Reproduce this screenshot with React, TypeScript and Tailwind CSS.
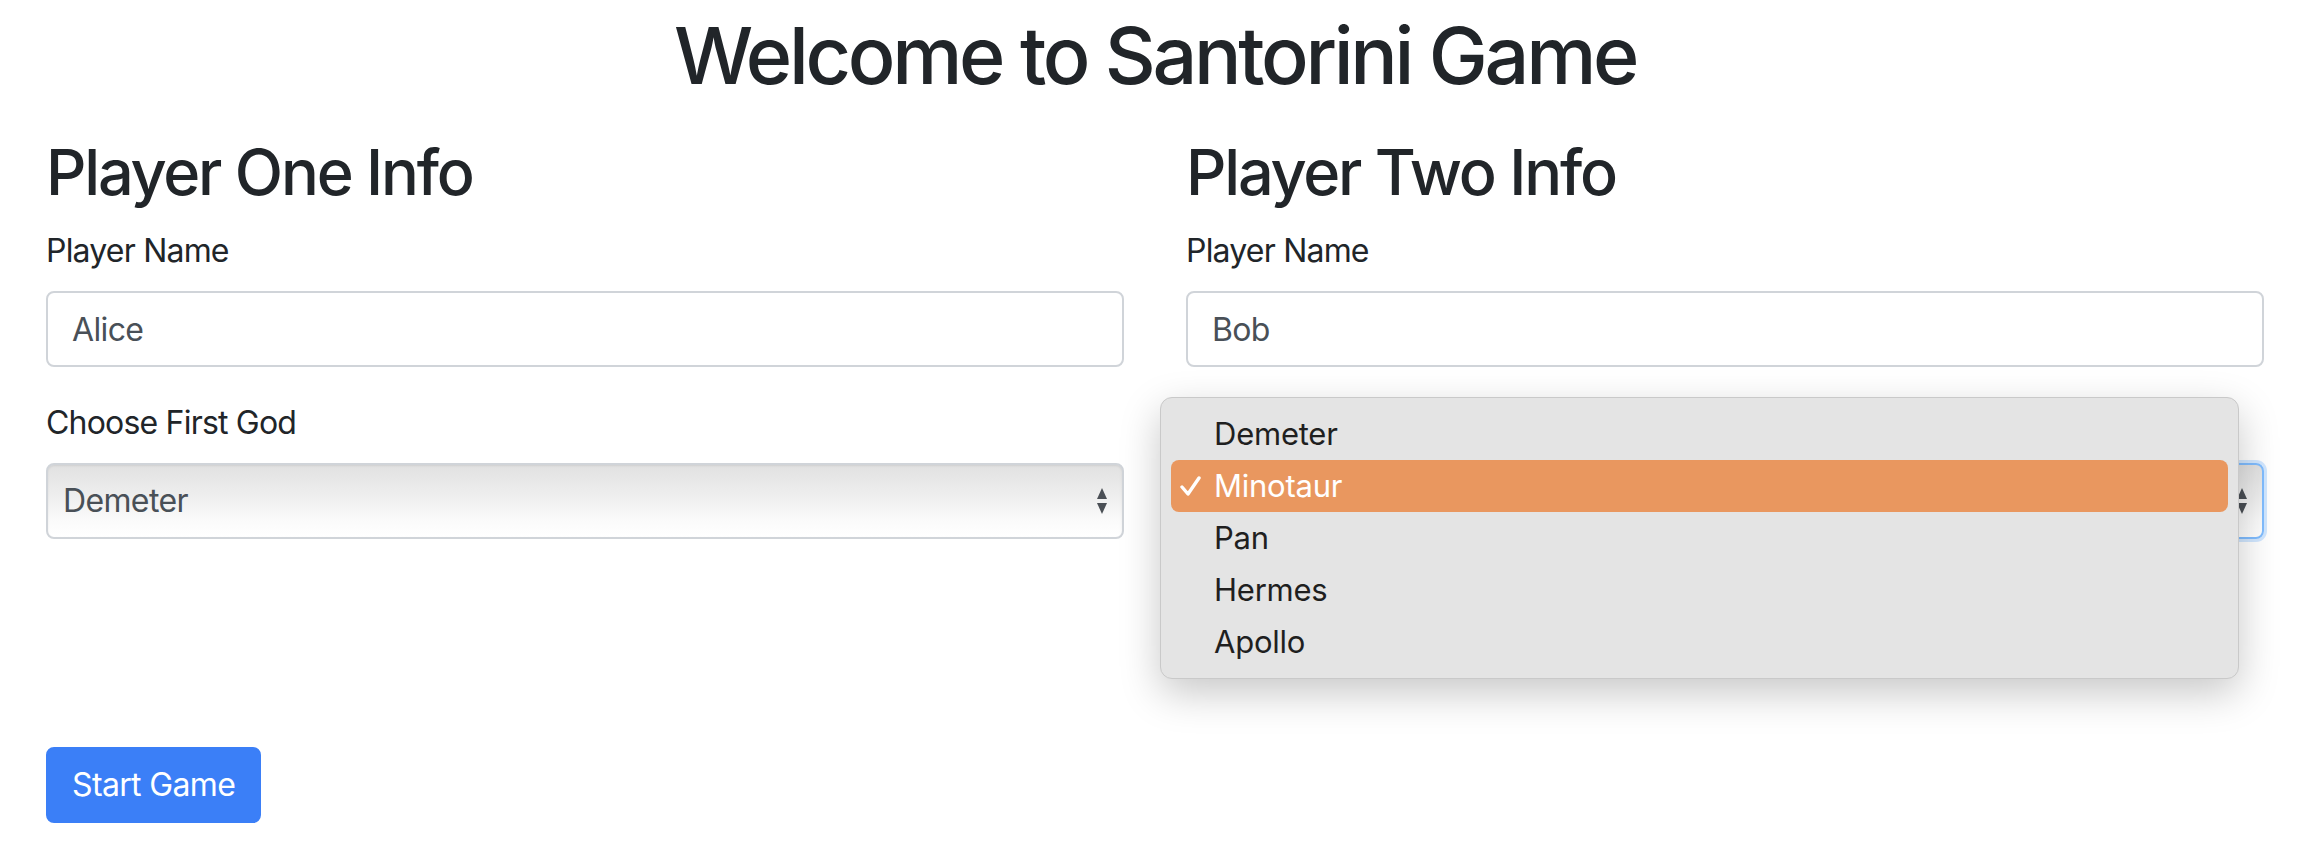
import React from "react";

const gods = ["Demeter", "Minotaur", "Pan", "Hermes", "Apollo"];

function Arrows() {
  return (
    <svg width="12" height="32" viewBox="0 0 12 32" className="shrink-0">
      <path d="M6 3 L11 14 L1 14 Z" fill="#4a4f55" />
      <path d="M1 18 L11 18 L6 29 Z" fill="#4a4f55" />
    </svg>
  );
}

function GodSelect({ value, focused }: { value: string; focused?: boolean }) {
  return (
    <div
      className={
        focused
          ? "flex h-[76px] w-full items-center justify-between rounded-[8px] border-2 border-[#80bdff] bg-[linear-gradient(to_bottom,#e1e1e1,#efefef_45%,#fafafa_75%,#ffffff)] pl-[15px] pr-[14px] text-[32px] tracking-[-0.02em] text-[#495057] shadow-[0_0_0_3px_rgba(0,123,255,0.18)]"
          : "flex h-[76px] w-full items-center justify-between rounded-[8px] border-2 border-[#d0d4d9] bg-[linear-gradient(to_bottom,#e1e1e1,#efefef_45%,#fafafa_75%,#ffffff)] pl-[15px] pr-[14px] text-[32px] tracking-[-0.02em] text-[#495057] shadow-[inset_0_1px_2px_rgba(0,0,0,0.08)]"
      }
    >
      <span className={focused ? "invisible" : ""}>{value}</span>
      <Arrows />
    </div>
  );
}

function GodMenu({ selected }: { selected: string }) {
  return (
    <div className="absolute left-[-26px] top-[-66px] z-10 w-[1079px] rounded-[12px] border border-[#c9c9c9] bg-[#e4e4e4] p-[10px] tracking-[-0.015em] shadow-[0_14px_40px_rgba(0,0,0,0.22)]">
      {gods.map((g) =>
        g === selected ? (
          <div
            key={g}
            className="flex h-[52px] items-center gap-[13px] rounded-[8px] bg-[#e9975f] pl-[9px] text-[31px] text-white"
          >
            <svg width="21" height="20" viewBox="0 0 21 20">
              <path
                d="M2 11 L8 18 L19 2"
                fill="none"
                stroke="white"
                strokeWidth="3.4"
                strokeLinecap="round"
                strokeLinejoin="round"
              />
            </svg>
            <span>{g}</span>
          </div>
        ) : (
          <div key={g} className="flex h-[52px] items-center pl-[43px] text-[31px] text-[#1f1f1f]">
            {g}
          </div>
        ),
      )}
    </div>
  );
}

function PlayerColumn({
  title,
  name,
  godLabel,
  god,
  open,
}: {
  title: string;
  name: string;
  godLabel: string;
  god: string;
  open?: boolean;
}) {
  return (
    <div>
      <h2 className="mb-[16px] text-[63px] font-medium leading-[77px] tracking-[-0.035em]">{title}</h2>
      <div className="mb-[32px]">
        <label className="mb-[16px] block text-[32px] leading-[48px] tracking-[-0.025em]">Player Name</label>
        <input
          readOnly
          value={name}
          className="h-[76px] w-full rounded-[8px] border-2 border-[#d0d4d9] bg-white px-[24px] text-[32px] tracking-[-0.02em] text-[#495057] outline-none"
        />
      </div>
      <div className="mb-[32px]">
        <label
          className={
            open
              ? "invisible mb-[16px] block text-[32px] leading-[48px] tracking-[-0.025em]"
              : "mb-[16px] block text-[32px] leading-[48px] tracking-[-0.025em]"
          }
        >
          {godLabel}
        </label>
        <div className="relative">
          <GodSelect value={god} focused={open} />
          {open && <GodMenu selected={god} />}
        </div>
      </div>
    </div>
  );
}

export default function App() {
  return (
    <div className="min-h-screen bg-white pl-[46px] pr-[54px] font-['Inter',sans-serif] text-[#212529]">
      <h1 className="pt-[7px] text-center text-[79px] font-medium leading-[96px] tracking-[-0.042em]">
        Welcome to Santorini Game
      </h1>
      <div className="mt-[31px] grid grid-cols-2 gap-x-[62px]">
        <PlayerColumn title="Player One Info" name="Alice" godLabel="Choose First God" god="Demeter" />
        <PlayerColumn title="Player Two Info" name="Bob" godLabel="Choose Second God" god="Minotaur" open />
      </div>
      <button className="mt-[176px] h-[76px] rounded-[8px] border-2 border-[#3b7ff7] bg-[#3b7ff7] px-[24px] text-[32px] tracking-[-0.02em] text-white">
        Start Game
      </button>
    </div>
  );
}
